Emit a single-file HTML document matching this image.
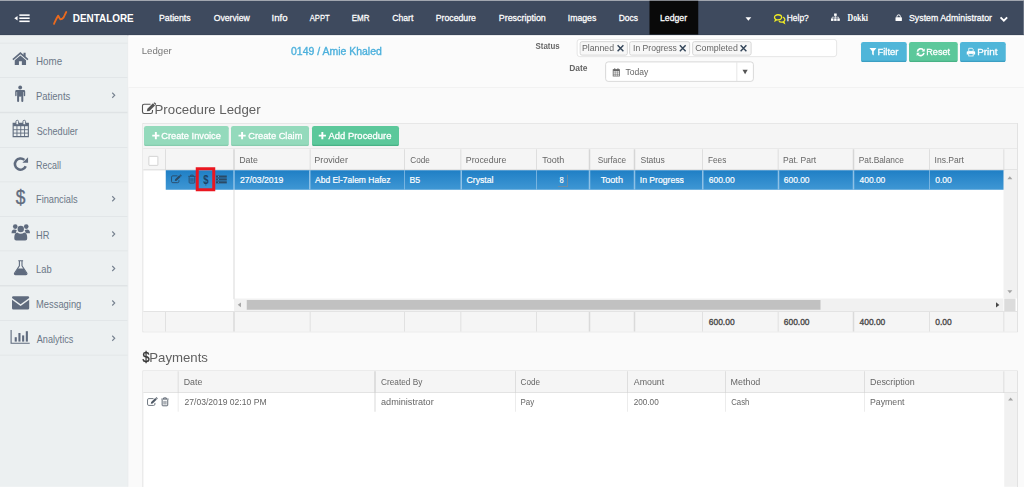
<!DOCTYPE html>
<html>
<head>
<meta charset="utf-8">
<title>Ledger</title>
<style>
*{box-sizing:border-box;margin:0;padding:0}
html,body{width:1024px;height:487px;overflow:hidden;background:#fafafa;font-family:"Liberation Sans",sans-serif;font-size:10px;color:#555}
.a,.t,svg{position:absolute}
.t{white-space:pre;display:block;transform-origin:0 0}
svg{overflow:visible}
</style>
</head>
<body>
<div id="r" style="position:absolute;left:0;top:0;width:1365.33px;height:649.33px;transform:scale(.75);transform-origin:0 0">
<nav>
<div class="a" style="left:0.00px;top:0.00px;width:1365.33px;height:47.07px;background:#3e4a5e;border-top:1px solid #a9adb4;border-bottom:1px solid #364255"></div>
<div class="a" style="left:170.67px;top:47.07px;width:1194.67px;height:2.53px;background:#fff"></div>
<div class="a" style="left:866.00px;top:0.00px;width:65.20px;height:46.40px;background:#090909"></div>
<div class="a" style="left:0.00px;top:0.00px;width:1365.33px;height:1.07px;background:#a9adb4"></div>
<svg style="left:18.53px;top:18.67px" width="20.53" height="10.67" viewBox="0 0 15.4 8"><path d="M0 4 L3.3 1.7 V6.3 Z" fill="#fff"/><rect x="5.1" y="0.1" width="10.3" height="1.55" fill="#fff"/><rect x="5.1" y="3.2" width="10.3" height="1.55" fill="#fff"/><rect x="5.1" y="6.3" width="10.3" height="1.55" fill="#fff"/></svg>
<svg style="left:70.67px;top:15.07px" width="18.13" height="17.60" viewBox="0 0 13.6 13.2"><path d="M0.8 12.6 C2.2 9.6 3.4 6.6 5 4.4 C5.8 5.6 6.2 7.4 7.2 8 C8.4 8 9.6 7.2 10.2 6.4 C11.2 4.8 12 2.6 13 0.7" stroke="#ea6a1e" stroke-width="1.85" fill="none" stroke-linecap="round" stroke-linejoin="round"/></svg>
<span class="t" style="left:97.07px;top:17.00px;font-size:13.73px;line-height:16px;transform:scaleX(0.964);color:#fff;font-weight:bold;">DENTALORE</span>
<span class="t" style="left:212.12px;top:17.00px;font-size:12.4px;line-height:15px;transform:scaleX(0.942);color:#fff;-webkit-text-stroke:0.35px #fff;">Patients</span>
<span class="t" style="left:284.67px;top:17.00px;font-size:12.4px;line-height:15px;transform:scaleX(0.931);color:#fff;-webkit-text-stroke:0.35px #fff;">Overview</span>
<span class="t" style="left:361.64px;top:17.00px;font-size:12.4px;line-height:15px;transform:scaleX(1.032);color:#fff;-webkit-text-stroke:0.35px #fff;">Info</span>
<span class="t" style="left:413.07px;top:17.00px;font-size:12.4px;line-height:15px;transform:scaleX(0.821);color:#fff;-webkit-text-stroke:0.35px #fff;">APPT</span>
<span class="t" style="left:469.40px;top:17.00px;font-size:12.4px;line-height:15px;transform:scaleX(0.863);color:#fff;-webkit-text-stroke:0.35px #fff;">EMR</span>
<span class="t" style="left:523.07px;top:17.00px;font-size:12.4px;line-height:15px;transform:scaleX(0.929);color:#fff;-webkit-text-stroke:0.35px #fff;">Chart</span>
<span class="t" style="left:581.33px;top:17.00px;font-size:12.4px;line-height:15px;transform:scaleX(0.938);color:#fff;-webkit-text-stroke:0.35px #fff;">Procedure</span>
<span class="t" style="left:665.17px;top:17.00px;font-size:12.4px;line-height:15px;transform:scaleX(0.959);color:#fff;-webkit-text-stroke:0.35px #fff;">Prescription</span>
<span class="t" style="left:757.33px;top:17.00px;font-size:12.4px;line-height:15px;transform:scaleX(0.937);color:#fff;-webkit-text-stroke:0.35px #fff;">Images</span>
<span class="t" style="left:825.09px;top:17.00px;font-size:12.4px;line-height:15px;transform:scaleX(0.912);color:#fff;-webkit-text-stroke:0.35px #fff;">Docs</span>
<span class="t" style="left:880.26px;top:17.00px;font-size:12.4px;line-height:15px;transform:scaleX(0.936);color:#fff;-webkit-text-stroke:0.35px #fff;">Ledger</span>
<svg style="left:994.40px;top:22.67px" width="7.73" height="4.53" viewBox="0 0 5.8 3.4"><path d="M0 0 H5.8 L2.9 3.4 Z" fill="#fff"/></svg>
<svg style="left:1032.13px;top:18.93px" width="15.20" height="12.53" viewBox="0 0 11.4 9.4"><path d="M4 0.5 C6 0.5 7.6 1.6 7.6 3.1 C7.6 4.6 6 5.7 4 5.7 C3.6 5.7 3.2 5.65 2.8 5.55 L1.2 6.6 L1.6 5.1 C0.9 4.6 0.5 3.9 0.5 3.1 C0.5 1.6 2 0.5 4 0.5Z" fill="none" stroke="#efeb25" stroke-width="1.3"/><path d="M8.8 2.9 C10.1 3.3 10.9 4.2 10.9 5.3 C10.9 6.1 10.5 6.8 9.8 7.3 L10.3 8.9 L8.5 7.8 C7.3 8.1 5.8 7.9 4.9 7.1" fill="none" stroke="#efeb25" stroke-width="1.3"/></svg>
<span class="t" style="left:1049.23px;top:17.00px;font-size:12.4px;line-height:15px;transform:scaleX(0.906);color:#fff;-webkit-text-stroke:0.35px #fff;">Help?</span>
<svg style="left:1108.27px;top:18.13px" width="11.73" height="9.87" viewBox="0 0 8.8 7.4"><rect x="3.1" y="0" width="2.6" height="2.4" fill="#fff"/><rect x="0" y="4.9" width="2.5" height="2.5" fill="#fff"/><rect x="3.15" y="4.9" width="2.5" height="2.5" fill="#fff"/><rect x="6.3" y="4.9" width="2.5" height="2.5" fill="#fff"/><path d="M4.4 2.4 V4.9 M1.25 4.9 V3.7 H7.55 V4.9" stroke="#fff" stroke-width="0.7" fill="none"/></svg>
<span class="t" style="left:1130.13px;top:16.00px;font-size:13.33px;line-height:16px;transform:scaleX(0.782);color:#fff;font-weight:bold;font-family:'Liberation Serif',serif;">Dokki</span>
<svg style="left:1194.13px;top:18.80px" width="8.53" height="9.07" viewBox="0 0 6.4 6.8"><rect x="0" y="3" width="6.4" height="3.8" rx="0.5" fill="#fff"/><path d="M1.5 3.2 V2.3 a1.7 1.7 0 0 1 3.4 0 V3.2" stroke="#fff" stroke-width="1" fill="none"/></svg>
<span class="t" style="left:1211.73px;top:17.00px;font-size:12.4px;line-height:15px;transform:scaleX(0.945);color:#fff;-webkit-text-stroke:0.35px #fff;">System Administrator</span>
<svg style="left:1333.47px;top:21.60px" width="10.93" height="7.20" viewBox="0 0 8.2 5.4"><path d="M0.8 0.8 L4.1 4.1 L7.4 0.8" stroke="#fff" stroke-width="1.9" fill="none"/></svg>
</nav>
<aside>
<div class="a" style="left:0.00px;top:47.07px;width:169.87px;height:602.27px;background:#ecf0f1"></div>
<div class="a" style="left:169.73px;top:47.07px;width:1.20px;height:602.27px;background:#e3e7e9"></div>
<div class="a" style="left:0.00px;top:57.07px;width:169.73px;height:1.07px;background:#dfe3e5"></div>
<div class="a" style="left:0.00px;top:103.27px;width:169.73px;height:1.07px;background:#dfe3e5"></div>
<div class="a" style="left:0.00px;top:149.47px;width:169.73px;height:1.07px;background:#dfe3e5"></div>
<div class="a" style="left:0.00px;top:195.67px;width:169.73px;height:1.07px;background:#dfe3e5"></div>
<div class="a" style="left:0.00px;top:241.87px;width:169.73px;height:1.07px;background:#dfe3e5"></div>
<div class="a" style="left:0.00px;top:288.07px;width:169.73px;height:1.07px;background:#dfe3e5"></div>
<div class="a" style="left:0.00px;top:334.27px;width:169.73px;height:1.07px;background:#dfe3e5"></div>
<div class="a" style="left:0.00px;top:380.47px;width:169.73px;height:1.07px;background:#dfe3e5"></div>
<div class="a" style="left:0.00px;top:426.67px;width:169.73px;height:1.07px;background:#dfe3e5"></div>
<div class="a" style="left:0.00px;top:472.87px;width:169.73px;height:1.07px;background:#dfe3e5"></div>
<span class="t" style="left:47.95px;top:74.00px;font-size:13.33px;line-height:16px;transform:scaleX(0.98);color:#6b7787;">Home</span>
<span class="t" style="left:47.98px;top:121.00px;font-size:13.33px;line-height:16px;transform:scaleX(0.949);color:#6b7787;">Patients</span>
<svg style="left:149.33px;top:122.53px" width="5.33" height="8.00" viewBox="0 0 4 6"><path d="M0.5 0.5 L3 3 L0.5 5.5" stroke="#76818f" stroke-width="1.1" fill="none"/></svg>
<span class="t" style="left:48.93px;top:168.00px;font-size:13.33px;line-height:16px;transform:scaleX(0.913);color:#6b7787;">Scheduler</span>
<span class="t" style="left:48.04px;top:213.00px;font-size:13.33px;line-height:16px;transform:scaleX(0.898);color:#6b7787;">Recall</span>
<span class="t" style="left:48.01px;top:259.00px;font-size:13.33px;line-height:16px;transform:scaleX(0.924);color:#6b7787;">Financials</span>
<svg style="left:149.33px;top:261.20px" width="5.33" height="8.00" viewBox="0 0 4 6"><path d="M0.5 0.5 L3 3 L0.5 5.5" stroke="#76818f" stroke-width="1.1" fill="none"/></svg>
<span class="t" style="left:48.00px;top:306.00px;font-size:13.33px;line-height:16px;transform:scaleX(0.93);color:#6b7787;">HR</span>
<svg style="left:149.33px;top:307.87px" width="5.33" height="8.00" viewBox="0 0 4 6"><path d="M0.5 0.5 L3 3 L0.5 5.5" stroke="#76818f" stroke-width="1.1" fill="none"/></svg>
<span class="t" style="left:48.00px;top:352.00px;font-size:13.33px;line-height:16px;transform:scaleX(0.935);color:#6b7787;">Lab</span>
<svg style="left:149.33px;top:353.87px" width="5.33" height="8.00" viewBox="0 0 4 6"><path d="M0.5 0.5 L3 3 L0.5 5.5" stroke="#76818f" stroke-width="1.1" fill="none"/></svg>
<span class="t" style="left:48.00px;top:398.00px;font-size:13.33px;line-height:16px;transform:scaleX(0.937);color:#6b7787;">Messaging</span>
<svg style="left:149.33px;top:400.00px" width="5.33" height="8.00" viewBox="0 0 4 6"><path d="M0.5 0.5 L3 3 L0.5 5.5" stroke="#76818f" stroke-width="1.1" fill="none"/></svg>
<span class="t" style="left:48.93px;top:445.00px;font-size:13.33px;line-height:16px;transform:scaleX(0.914);color:#6b7787;">Analytics</span>
<svg style="left:149.33px;top:446.67px" width="5.33" height="8.00" viewBox="0 0 4 6"><path d="M0.5 0.5 L3 3 L0.5 5.5" stroke="#76818f" stroke-width="1.1" fill="none"/></svg>
<svg style="left:15.87px;top:68.93px" width="22.40" height="18.13" viewBox="0 0 16 13"><path d="M8 0.3 L0.3 6.9 L1.3 8.1 L8 2.5 L14.7 8.1 L15.7 6.9 L13 4.6 V0.9 H11 V2.9 Z" fill="#5f6b7e"/><path d="M8 3.6 L2.6 8.1 V12.7 H6.6 V9.2 H9.4 V12.7 H13.4 V8.1 Z" fill="#5f6b7e"/></svg>
<svg style="left:20.40px;top:114.00px" width="13.87" height="22.13" viewBox="0 0 10.4 16.6"><circle cx="5.2" cy="2" r="1.9" fill="#5f6b7e"/><path d="M1.6 4.6 H8.8 Q10.2 4.6 10.2 6 V10 Q10.2 10.8 9.5 10.8 Q8.8 10.8 8.8 10 V6.6 H8.3 V15.6 Q8.3 16.5 7.3 16.5 Q6.3 16.5 6.3 15.6 V10.8 H5.6 H4.1 V15.6 Q4.1 16.5 3.1 16.5 Q2.1 16.5 2.1 15.6 V6.6 H1.6 V10 Q1.6 10.8 0.9 10.8 Q0.2 10.8 0.2 10 V6 Q0.2 4.6 1.6 4.6Z" fill="#5f6b7e"/><rect x="4.1" y="6" width="2.2" height="5" fill="#5f6b7e"/></svg>
<svg style="left:16.93px;top:160.00px" width="21.33" height="22.67" viewBox="0 0 16 17"><path d="M0.4 3.2 H15.6 V16.6 H0.4Z" fill="none" stroke="#5f6b7e" stroke-width="1.1"/><rect x="0.4" y="3" width="15.2" height="3.2" fill="#5f6b7e"/><path d="M0.4 9.7 H15.6 M0.4 13.1 H15.6 M4.2 6 V16.6 M8 6 V16.6 M11.8 6 V16.6" stroke="#5f6b7e" stroke-width="0.9" fill="none"/><rect x="3.2" y="0.3" width="2.6" height="4.4" rx="1.2" fill="#ecf0f1" stroke="#5f6b7e" stroke-width="0.9"/><rect x="10.2" y="0.3" width="2.6" height="4.4" rx="1.2" fill="#ecf0f1" stroke="#5f6b7e" stroke-width="0.9"/></svg>
<svg style="left:17.60px;top:208.53px" width="19.73" height="18.93" viewBox="0 0 15 14"><path d="M12.4 9.4 A5.7 5.7 0 1 1 11 3" fill="none" stroke="#5f6b7e" stroke-width="2.6"/><path d="M14.8 0.2 V6 H9 Z" fill="#5f6b7e"/></svg>
<svg style="left:14.80px;top:298.13px" width="25.33" height="22.93" viewBox="0 0 19 17"><circle cx="4" cy="3" r="2.3" fill="#5f6b7e"/><circle cx="15" cy="3" r="2.3" fill="#5f6b7e"/><circle cx="9.5" cy="5.4" r="3.2" fill="#5f6b7e"/><path d="M0.3 9.4 Q0.3 5.8 3 5.8 Q5 5.8 5.6 7 Q4.6 8.4 4.6 9.6 H0.3Z" fill="#5f6b7e"/><path d="M18.7 9.4 Q18.7 5.8 16 5.8 Q14 5.8 13.4 7 Q14.4 8.4 14.4 9.6 H18.7Z" fill="#5f6b7e"/><path d="M3 14.6 Q3 9.2 6 9 Q9.5 11.4 13 9 Q16 9.2 16 14.6 Q16 16.8 14 16.8 H5 Q3 16.8 3 14.6Z" fill="#5f6b7e"/></svg>
<svg style="left:17.60px;top:346.67px" width="19.20" height="20.00" viewBox="0 0 14.4 15"><path d="M4.8 0.5 H9.6 M5.9 0.5 V5.6 L1 13 Q0.6 14.4 2 14.4 H12.4 Q13.8 14.4 13.4 13 L8.5 5.6 V0.5" fill="none" stroke="#5f6b7e" stroke-width="1.1"/><path d="M4.2 8.2 H10.2 L13.2 13.2 Q13.5 14.3 12.4 14.3 H2 Q0.9 14.3 1.2 13.2Z" fill="#5f6b7e"/></svg>
<svg style="left:15.87px;top:394.67px" width="22.93" height="17.73" viewBox="0 0 17.2 13.3"><path d="M1.4 0 H15.8 Q17.2 0 17.2 1.4 V1.8 L8.6 8 L0 1.8 V1.4 Q0 0 1.4 0Z" fill="#5f6b7e"/><path d="M0 3.6 L8.6 9.8 L17.2 3.6 V11.9 Q17.2 13.3 15.8 13.3 H1.4 Q0 13.3 0 11.9Z" fill="#5f6b7e"/></svg>
<svg style="left:14.40px;top:440.00px" width="25.60" height="18.67" viewBox="0 0 19.2 14"><path d="M0.6 0 V13.3 H19.2" fill="none" stroke="#5f6b7e" stroke-width="1.1"/><rect x="4.2" y="7.2" width="2.1" height="4.4" fill="#5f6b7e"/><rect x="7.9" y="3" width="2.1" height="8.6" fill="#5f6b7e"/><rect x="11.6" y="5.4" width="2.1" height="6.2" fill="#5f6b7e"/><rect x="15.3" y="1.2" width="2.1" height="10.4" fill="#5f6b7e"/></svg>
<span class="t" style="left:21.07px;top:248.00px;font-size:25.87px;line-height:31px;transform:scaleX(0.895);color:#5f6b7e;-webkit-text-stroke:0.5px #5f6b7e;">$</span>
</aside>
<main>
<header>
<div class="a" style="left:170.93px;top:49.60px;width:1194.40px;height:67.20px;background:#fbfbfb;border-bottom:1px solid #efefef"></div>
<span class="t" style="left:188.88px;top:60.00px;font-size:13.07px;line-height:16px;transform:scaleX(0.985);color:#777;">Ledger</span>
<span class="t" style="left:387.73px;top:61.00px;font-size:13.6px;line-height:16px;transform:scaleX(1.027);color:#4cb0dc;-webkit-text-stroke:0.45px #4cb0dc;">0149 / Amie Khaled</span>
<span class="t" style="left:714.27px;top:54.00px;font-size:12.0px;line-height:14px;transform:scaleX(0.879);color:#666;font-weight:bold;">Status</span>
<span class="t" style="left:759.33px;top:83.00px;font-size:12.0px;line-height:14px;transform:scaleX(0.937);color:#666;font-weight:bold;">Date</span>
<div class="a" style="left:769.33px;top:52.40px;width:346.67px;height:23.73px;background:#fff;border:1px solid #ddd;border-radius:4px"></div>
<div class="a" style="left:772.80px;top:54.67px;width:64.40px;height:18.93px;background:#f7f7f7;border:1px solid #ccc;border-radius:3px"></div>
<span class="t" style="left:776.39px;top:57.00px;font-size:12.4px;line-height:15px;transform:scaleX(0.939);color:#666;">Planned</span>
<svg style="left:821.60px;top:58.93px" width="10.67" height="10.67" viewBox="-4 -4 8 8"><path d="M-2.9 -2.9 L2.9 2.9 M-2.9 2.9 L2.9 -2.9" stroke="#34465a" stroke-width="1.45" fill="none"/></svg>
<div class="a" style="left:838.80px;top:54.67px;width:81.20px;height:18.93px;background:#f7f7f7;border:1px solid #ccc;border-radius:3px"></div>
<span class="t" style="left:843.74px;top:57.00px;font-size:12.4px;line-height:15px;transform:scaleX(0.924);color:#666;">In Progress</span>
<svg style="left:904.93px;top:58.93px" width="10.67" height="10.67" viewBox="-4 -4 8 8"><path d="M-2.9 -2.9 L2.9 2.9 M-2.9 2.9 L2.9 -2.9" stroke="#34465a" stroke-width="1.45" fill="none"/></svg>
<div class="a" style="left:922.67px;top:54.67px;width:79.33px;height:18.93px;background:#f7f7f7;border:1px solid #ccc;border-radius:3px"></div>
<span class="t" style="left:927.47px;top:57.00px;font-size:12.4px;line-height:15px;transform:scaleX(0.948);color:#666;">Completed</span>
<svg style="left:986.33px;top:58.93px" width="10.67" height="10.67" viewBox="-4 -4 8 8"><path d="M-2.9 -2.9 L2.9 2.9 M-2.9 2.9 L2.9 -2.9" stroke="#34465a" stroke-width="1.45" fill="none"/></svg>
<div class="a" style="left:806.67px;top:81.87px;width:197.87px;height:27.07px;background:#fff;border:1px solid #ccc;border-radius:4px"></div>
<div class="a" style="left:981.73px;top:83.20px;width:1.07px;height:24.40px;background:#ddd"></div>
<svg style="left:816.67px;top:91.20px" width="9.60" height="10.93" viewBox="0 0 7.2 8.2"><rect x="0.4" y="1.4" width="6.4" height="6.4" fill="none" stroke="#666" stroke-width="0.8"/><rect x="0.4" y="1.2" width="6.4" height="1.8" fill="#666"/><path d="M0.4 4.6 H6.8 M0.4 6.2 H6.8 M2.5 3 V7.8 M4.7 3 V7.8" stroke="#666" stroke-width="0.5"/><rect x="1.5" y="0" width="1" height="2" fill="#666"/><rect x="4.7" y="0" width="1" height="2" fill="#666"/></svg>
<span class="t" style="left:833.73px;top:89.00px;font-size:12.4px;line-height:15px;transform:scaleX(0.921);color:#666;">Today</span>
<svg style="left:990.13px;top:93.07px" width="6.93" height="5.87" viewBox="0 0 5.2 4.4"><path d="M0 0 H5.2 L2.6 4.4Z" fill="#555"/></svg>
<div class="a" style="left:1148.00px;top:55.87px;width:60.93px;height:26.80px;background:#50b6d9;border-bottom:2px solid #3b9fc3;border-radius:3px"></div>
<div class="a" style="left:1212.00px;top:55.87px;width:64.53px;height:26.80px;background:#5cc89b;border-bottom:2px solid #48b286;border-radius:3px"></div>
<div class="a" style="left:1279.73px;top:55.87px;width:61.20px;height:26.80px;background:#50b6d9;border-bottom:2px solid #3b9fc3;border-radius:3px"></div>
<svg style="left:1158.53px;top:64.13px" width="9.87" height="10.40" viewBox="0 0 7.2 7.6"><path d="M0.2 0 H7 L4.4 3.2 V7.4 L2.8 6 V3.2Z" fill="#fff"/></svg>
<span class="t" style="left:1170.24px;top:61.00px;font-size:13.07px;line-height:16px;transform:scaleX(0.962);color:#fff;-webkit-text-stroke:0.4px #fff;">Filter</span>
<svg style="left:1221.73px;top:63.60px" width="11.20" height="11.20" viewBox="0 0 8.4 8.4"><path d="M0.9 3.6 A3.4 3.4 0 0 1 6.8 1.9 M7.5 4.8 A3.4 3.4 0 0 1 1.6 6.5" stroke="#fff" stroke-width="1.6" fill="none"/><path d="M8.2 0.4 V3.6 H5Z M0.2 8 V4.8 H3.4Z" fill="#fff"/></svg>
<span class="t" style="left:1235.07px;top:61.00px;font-size:13.07px;line-height:16px;transform:scaleX(0.932);color:#fff;-webkit-text-stroke:0.4px #fff;">Reset</span>
<svg style="left:1289.33px;top:63.60px" width="11.20" height="11.20" viewBox="0 0 8.4 8.4"><path d="M2 0.3 H5.6 L6.4 1.2 V3.4 H2Z" fill="none" stroke="#fff" stroke-width="0.8"/><path d="M0.8 3.2 H7.6 Q8.4 3.2 8.4 4 V6.6 H6.8 V5.2 H1.6 V6.6 H0 V4 Q0 3.2 0.8 3.2Z" fill="#fff"/><rect x="2" y="5.6" width="4.4" height="2.4" fill="none" stroke="#fff" stroke-width="0.8"/></svg>
<span class="t" style="left:1303.26px;top:61.00px;font-size:13.07px;line-height:16px;transform:scaleX(1.007);color:#fff;-webkit-text-stroke:0.4px #fff;">Print</span>
</header>
<section>
<svg style="left:188.80px;top:136.53px" width="19.52" height="15.45" viewBox="0 0 12 9.5"><path d="M7.2 1.2 H2 Q0.6 1.2 0.6 2.6 V7.4 Q0.6 8.8 2 8.8 H7.4 Q8.8 8.8 8.8 7.4 V6" fill="none" stroke="#555" stroke-width="0.9"/><path d="M4.2 6.9 L4.6 5 L9.2 0.5 L10.9 2.2 L6.3 6.7Z M9.7 0.2 L10.2 -0.2 Q10.6 -0.4 11 0 L11.6 0.6 Q12 1 11.7 1.4 L11.3 1.9Z" fill="#555"/></svg>
<span class="t" style="left:206.48px;top:135.00px;font-size:18.0px;line-height:22px;transform:scaleX(0.982);color:#606060;">Procedure Ledger</span>
<div class="a" style="left:189.73px;top:163.73px;width:1167.20px;height:278.93px;background:#fff;border:1px solid #d9d9d9"></div>
<div class="a" style="left:190.80px;top:164.80px;width:1165.07px;height:34.67px;background:#f5f5f5;border-bottom:1px solid #ddd"></div>
<div class="a" style="left:192.40px;top:167.87px;width:112.40px;height:27.07px;background:#94dabc;border-bottom:2px solid #86ccae;border-radius:3px"></div>
<div class="a" style="left:308.00px;top:167.87px;width:104.40px;height:27.07px;background:#94dabc;border-bottom:2px solid #86ccae;border-radius:3px"></div>
<div class="a" style="left:415.73px;top:167.87px;width:116.53px;height:27.07px;background:#5cc89b;border-bottom:2px solid #48b286;border-radius:3px"></div>
<svg style="left:202.67px;top:176.40px" width="9.60" height="9.60" viewBox="0 0 7.2 7.2"><path d="M3.6 0 V7.2 M0 3.6 H7.2" stroke="#fff" stroke-width="1.9" fill="none"/></svg>
<span class="t" style="left:215.47px;top:174.00px;font-size:12.67px;line-height:15px;transform:scaleX(0.974);color:#fff;-webkit-text-stroke:0.4px #fff;">Create Invoice</span>
<svg style="left:317.87px;top:176.40px" width="9.60" height="9.60" viewBox="0 0 7.2 7.2"><path d="M3.6 0 V7.2 M0 3.6 H7.2" stroke="#fff" stroke-width="1.9" fill="none"/></svg>
<span class="t" style="left:330.93px;top:174.00px;font-size:12.67px;line-height:15px;transform:scaleX(0.977);color:#fff;-webkit-text-stroke:0.4px #fff;">Create Claim</span>
<svg style="left:425.47px;top:176.40px" width="9.60" height="9.60" viewBox="0 0 7.2 7.2"><path d="M3.6 0 V7.2 M0 3.6 H7.2" stroke="#fff" stroke-width="1.9" fill="none"/></svg>
<span class="t" style="left:438.40px;top:174.00px;font-size:12.67px;line-height:15px;transform:scaleX(0.995);color:#fff;-webkit-text-stroke:0.4px #fff;">Add Procedure</span>
<div class="a" style="left:190.80px;top:199.47px;width:1165.07px;height:27.73px;background:#f5f5f5;border-bottom:1px solid #d4d4d4"></div>
<div class="a" style="left:198.13px;top:208.13px;width:12.53px;height:13.07px;background:#fff;border:1px solid #c8c8c8;border-radius:1px"></div>
<div class="a" style="left:220.67px;top:226.80px;width:1117.87px;height:26.13px;background:linear-gradient(#1f7fc5,#3f97d4)"></div>
<div class="a" style="left:312.00px;top:398.13px;width:1026.40px;height:16.80px;background:#f1f1f1"></div>
<div class="a" style="left:1338.80px;top:398.13px;width:15.60px;height:16.80px;background:#dcdcdc"></div>
<div class="a" style="left:328.67px;top:400.13px;width:765.33px;height:12.80px;background:#c1c1c1"></div>
<svg style="left:317.33px;top:402.93px" width="4.27" height="6.93" viewBox="0 0 3 4.6"><path d="M3 0 V4.6 L0 2.3Z" fill="#a3a3a3"/></svg>
<svg style="left:1327.73px;top:402.67px" width="4.53" height="7.20" viewBox="0 0 3 4.6"><path d="M0 0 V4.6 L3 2.3Z" fill="#484848"/></svg>
<div class="a" style="left:1338.40px;top:226.80px;width:17.47px;height:171.33px;background:#f1f1f1"></div>
<svg style="left:1343.47px;top:234.53px" width="6.93" height="4.00" viewBox="0 0 5 3"><path d="M0 3 H5 L2.5 0Z" fill="#a3a3a3"/></svg>
<svg style="left:1343.47px;top:386.93px" width="6.93" height="4.00" viewBox="0 0 5 3"><path d="M0 0 H5 L2.5 3Z" fill="#a3a3a3"/></svg>
<div class="a" style="left:190.80px;top:414.93px;width:1165.07px;height:26.67px;background:#f5f5f5;border-top:1px solid #ddd"></div>
<div class="a" style="left:219.73px;top:199.47px;width:1.07px;height:27.73px;background:#d6d6d6"></div>
<div class="a" style="left:219.73px;top:416.00px;width:1.07px;height:25.60px;background:#dadada"></div>
<div class="a" style="left:311.47px;top:199.47px;width:1.07px;height:27.73px;background:#d6d6d6"></div>
<div class="a" style="left:311.47px;top:416.00px;width:1.07px;height:25.60px;background:#dadada"></div>
<div class="a" style="left:311.33px;top:226.80px;width:1.33px;height:26.13px;background:#8fc1e6"></div>
<div class="a" style="left:412.53px;top:199.47px;width:1.07px;height:27.73px;background:#d6d6d6"></div>
<div class="a" style="left:412.53px;top:416.00px;width:1.07px;height:25.60px;background:#dadada"></div>
<div class="a" style="left:412.40px;top:226.80px;width:1.33px;height:26.13px;background:#8fc1e6"></div>
<div class="a" style="left:539.07px;top:199.47px;width:1.07px;height:27.73px;background:#d6d6d6"></div>
<div class="a" style="left:539.07px;top:416.00px;width:1.07px;height:25.60px;background:#dadada"></div>
<div class="a" style="left:538.93px;top:226.80px;width:1.33px;height:26.13px;background:#8fc1e6"></div>
<div class="a" style="left:614.40px;top:199.47px;width:1.07px;height:27.73px;background:#d6d6d6"></div>
<div class="a" style="left:614.40px;top:416.00px;width:1.07px;height:25.60px;background:#dadada"></div>
<div class="a" style="left:614.27px;top:226.80px;width:1.33px;height:26.13px;background:#8fc1e6"></div>
<div class="a" style="left:714.93px;top:199.47px;width:1.07px;height:27.73px;background:#d6d6d6"></div>
<div class="a" style="left:714.93px;top:416.00px;width:1.07px;height:25.60px;background:#dadada"></div>
<div class="a" style="left:714.80px;top:226.80px;width:1.33px;height:26.13px;background:#8fc1e6"></div>
<div class="a" style="left:785.47px;top:199.47px;width:1.07px;height:27.73px;background:#d6d6d6"></div>
<div class="a" style="left:785.47px;top:416.00px;width:1.07px;height:25.60px;background:#dadada"></div>
<div class="a" style="left:785.33px;top:226.80px;width:1.33px;height:26.13px;background:#8fc1e6"></div>
<div class="a" style="left:845.47px;top:199.47px;width:1.07px;height:27.73px;background:#d6d6d6"></div>
<div class="a" style="left:845.47px;top:416.00px;width:1.07px;height:25.60px;background:#dadada"></div>
<div class="a" style="left:845.33px;top:226.80px;width:1.33px;height:26.13px;background:#8fc1e6"></div>
<div class="a" style="left:936.40px;top:199.47px;width:1.07px;height:27.73px;background:#d6d6d6"></div>
<div class="a" style="left:936.40px;top:416.00px;width:1.07px;height:25.60px;background:#dadada"></div>
<div class="a" style="left:936.27px;top:226.80px;width:1.33px;height:26.13px;background:#8fc1e6"></div>
<div class="a" style="left:1037.33px;top:199.47px;width:1.07px;height:27.73px;background:#d6d6d6"></div>
<div class="a" style="left:1037.33px;top:416.00px;width:1.07px;height:25.60px;background:#dadada"></div>
<div class="a" style="left:1037.20px;top:226.80px;width:1.33px;height:26.13px;background:#8fc1e6"></div>
<div class="a" style="left:1137.47px;top:199.47px;width:1.07px;height:27.73px;background:#d6d6d6"></div>
<div class="a" style="left:1137.47px;top:416.00px;width:1.07px;height:25.60px;background:#dadada"></div>
<div class="a" style="left:1137.33px;top:226.80px;width:1.33px;height:26.13px;background:#8fc1e6"></div>
<div class="a" style="left:1238.80px;top:199.47px;width:1.07px;height:27.73px;background:#d6d6d6"></div>
<div class="a" style="left:1238.80px;top:416.00px;width:1.07px;height:25.60px;background:#dadada"></div>
<div class="a" style="left:1238.67px;top:226.80px;width:1.33px;height:26.13px;background:#8fc1e6"></div>
<div class="a" style="left:1338.00px;top:199.47px;width:1.07px;height:27.73px;background:#d6d6d6"></div>
<div class="a" style="left:1338.00px;top:416.00px;width:1.07px;height:25.60px;background:#dadada"></div>
<div class="a" style="left:311.33px;top:252.93px;width:1.33px;height:145.73px;background:#e6e6e6"></div>
<span class="t" style="left:319.05px;top:206.00px;font-size:12.4px;line-height:15px;transform:scaleX(0.949);color:#666;">Date</span>
<span class="t" style="left:419.30px;top:206.00px;font-size:12.4px;line-height:15px;transform:scaleX(0.972);color:#666;">Provider</span>
<span class="t" style="left:546.93px;top:206.00px;font-size:12.4px;line-height:15px;transform:scaleX(0.879);color:#666;">Code</span>
<span class="t" style="left:620.92px;top:206.00px;font-size:12.4px;line-height:15px;transform:scaleX(0.948);color:#666;">Procedure</span>
<span class="t" style="left:722.80px;top:206.00px;font-size:12.4px;line-height:15px;transform:scaleX(0.969);color:#666;">Tooth</span>
<span class="t" style="left:797.20px;top:206.00px;font-size:12.4px;line-height:15px;transform:scaleX(0.885);color:#666;">Surface</span>
<span class="t" style="left:853.73px;top:206.00px;font-size:12.4px;line-height:15px;transform:scaleX(0.92);color:#666;">Status</span>
<span class="t" style="left:943.78px;top:206.00px;font-size:12.4px;line-height:15px;transform:scaleX(0.885);color:#666;">Fees</span>
<span class="t" style="left:1044.15px;top:206.00px;font-size:12.4px;line-height:15px;transform:scaleX(0.916);color:#666;">Pat. Part</span>
<span class="t" style="left:1145.10px;top:206.00px;font-size:12.4px;line-height:15px;transform:scaleX(0.9);color:#666;">Pat.Balance</span>
<span class="t" style="left:1245.75px;top:206.00px;font-size:12.4px;line-height:15px;transform:scaleX(0.921);color:#666;">Ins.Part</span>
<span class="t" style="left:320.00px;top:233.00px;font-size:12.53px;line-height:15px;transform:scaleX(0.921);color:#fff;-webkit-text-stroke:0.28px #fff;">27/03/2019</span>
<span class="t" style="left:420.27px;top:233.00px;font-size:12.53px;line-height:15px;transform:scaleX(0.904);color:#fff;-webkit-text-stroke:0.28px #fff;">Abd El-7alem Hafez</span>
<span class="t" style="left:546.00px;top:233.00px;font-size:12.53px;line-height:15px;transform:scaleX(0.929);color:#fff;-webkit-text-stroke:0.28px #fff;">B5</span>
<span class="t" style="left:621.87px;top:233.00px;font-size:12.53px;line-height:15px;transform:scaleX(0.922);color:#fff;-webkit-text-stroke:0.28px #fff;">Crystal</span>
<span class="t" style="left:746.40px;top:233.00px;font-size:12.53px;line-height:15px;transform:scaleX(0.8);color:#fff;-webkit-text-stroke:0.28px #fff;">8</span>
<span class="t" style="left:801.33px;top:233.00px;font-size:12.53px;line-height:15px;transform:scaleX(0.966);color:#fff;-webkit-text-stroke:0.28px #fff;">Tooth</span>
<span class="t" style="left:852.81px;top:233.00px;font-size:12.53px;line-height:15px;transform:scaleX(0.92);color:#fff;-webkit-text-stroke:0.28px #fff;">In Progress</span>
<span class="t" style="left:944.67px;top:233.00px;font-size:12.53px;line-height:15px;transform:scaleX(0.901);color:#fff;-webkit-text-stroke:0.28px #fff;">600.00</span>
<span class="t" style="left:1045.07px;top:233.00px;font-size:12.53px;line-height:15px;transform:scaleX(0.898);color:#fff;-webkit-text-stroke:0.28px #fff;">600.00</span>
<span class="t" style="left:1146.00px;top:233.00px;font-size:12.53px;line-height:15px;transform:scaleX(0.898);color:#fff;-webkit-text-stroke:0.28px #fff;">400.00</span>
<span class="t" style="left:1246.67px;top:233.00px;font-size:12.53px;line-height:15px;transform:scaleX(0.902);color:#fff;-webkit-text-stroke:0.28px #fff;">0.00</span>
<span class="t" style="left:944.67px;top:422.00px;font-size:12.53px;line-height:15px;transform:scaleX(0.901);color:#4a4a4a;-webkit-text-stroke:0.5px #4a4a4a;">600.00</span>
<span class="t" style="left:1045.07px;top:422.00px;font-size:12.53px;line-height:15px;transform:scaleX(0.898);color:#4a4a4a;-webkit-text-stroke:0.5px #4a4a4a;">600.00</span>
<span class="t" style="left:1146.00px;top:422.00px;font-size:12.53px;line-height:15px;transform:scaleX(0.898);color:#4a4a4a;-webkit-text-stroke:0.5px #4a4a4a;">400.00</span>
<span class="t" style="left:1246.67px;top:422.00px;font-size:12.53px;line-height:15px;transform:scaleX(0.902);color:#4a4a4a;-webkit-text-stroke:0.5px #4a4a4a;">0.00</span>
<svg style="left:228.00px;top:233.33px" width="14.40" height="11.40" viewBox="0 0 12 9.5"><path d="M7.2 1.2 H2 Q0.6 1.2 0.6 2.6 V7.4 Q0.6 8.8 2 8.8 H7.4 Q8.8 8.8 8.8 7.4 V6" fill="none" stroke="#2a4a66" stroke-width="1.0"/><path d="M4.2 6.9 L4.6 5 L9.2 0.5 L10.9 2.2 L6.3 6.7Z M9.7 0.2 L10.2 -0.2 Q10.6 -0.4 11 0 L11.6 0.6 Q12 1 11.7 1.4 L11.3 1.9Z" fill="#2a4a66"/></svg>
<svg style="left:251.47px;top:233.33px" width="9.87" height="11.47" viewBox="0 0 7.4 8.6"><path d="M0 1.6 H7.4 M2.4 1.6 V0.4 H5 V1.6" stroke="#2a4a66" stroke-width="0.9" fill="none"/><path d="M0.9 2.4 V7.6 Q0.9 8.3 1.6 8.3 H5.8 Q6.5 8.3 6.5 7.6 V2.4" fill="none" stroke="#2a4a66" stroke-width="0.9"/><path d="M2.6 3.4 V7 M3.7 3.4 V7 M4.8 3.4 V7" stroke="#2a4a66" stroke-width="0.6"/></svg>
<span class="t" style="left:271.47px;top:230.00px;font-size:16.8px;line-height:20px;transform:scaleX(0.76);color:#1f4263;font-weight:bold;">$</span>
<svg style="left:288.00px;top:233.87px" width="14.40" height="10.67" viewBox="0 0 10.8 8"><rect x="0" y="0" width="10.8" height="2.1" fill="#2a4a66"/><rect x="0" y="2.9" width="10.8" height="2.1" fill="#2a4a66"/><rect x="0" y="5.8" width="10.8" height="2.1" fill="#2a4a66"/><rect x="2" y="0.5" width="1" height="1" fill="#3d93d2"/><rect x="2" y="3.4" width="1" height="1" fill="#3d93d2"/><rect x="2" y="6.3" width="1" height="1" fill="#3d93d2"/></svg>
<div class="a" style="left:261.47px;top:222.67px;width:25.20px;height:32.80px;border:4.8px solid #ea1720"></div>
<div class="a" style="left:744.00px;top:232.93px;width:12.93px;height:16.00px;border-right:1.7px solid #7d8b99;border-bottom:1.7px solid #7d8b99"></div>
</section>
<section>
<span class="t" style="left:190.00px;top:464.00px;font-size:20.27px;line-height:24px;transform:scaleX(0.836);color:#333;-webkit-text-stroke:0.5px #333;">$</span>
<span class="t" style="left:199.29px;top:466.00px;font-size:18.0px;line-height:22px;transform:scaleX(0.978);color:#606060;">Payments</span>
<div class="a" style="left:189.73px;top:494.27px;width:1167.20px;height:165.73px;background:#fff;border:1px solid #d9d9d9"></div>
<div class="a" style="left:190.80px;top:495.33px;width:1165.07px;height:28.53px;background:#f5f5f5;border-bottom:1px solid #ddd"></div>
<div class="a" style="left:1339.07px;top:523.87px;width:16.80px;height:125.47px;background:#f1f1f1"></div>
<svg style="left:1343.73px;top:530.27px" width="6.93" height="4.00" viewBox="0 0 5 3"><path d="M0 3 H5 L2.5 0Z" fill="#a3a3a3"/></svg>
<div class="a" style="left:237.20px;top:495.33px;width:1.07px;height:28.53px;background:#d6d6d6"></div>
<div class="a" style="left:237.20px;top:523.87px;width:1.07px;height:25.20px;background:#e6e6e6"></div>
<div class="a" style="left:499.47px;top:495.33px;width:1.07px;height:28.53px;background:#d6d6d6"></div>
<div class="a" style="left:499.47px;top:523.87px;width:1.07px;height:25.20px;background:#e6e6e6"></div>
<div class="a" style="left:686.53px;top:495.33px;width:1.07px;height:28.53px;background:#d6d6d6"></div>
<div class="a" style="left:686.53px;top:523.87px;width:1.07px;height:25.20px;background:#e6e6e6"></div>
<div class="a" style="left:836.27px;top:495.33px;width:1.07px;height:28.53px;background:#d6d6d6"></div>
<div class="a" style="left:836.27px;top:523.87px;width:1.07px;height:25.20px;background:#e6e6e6"></div>
<div class="a" style="left:966.53px;top:495.33px;width:1.07px;height:28.53px;background:#d6d6d6"></div>
<div class="a" style="left:966.53px;top:523.87px;width:1.07px;height:25.20px;background:#e6e6e6"></div>
<div class="a" style="left:1152.40px;top:495.33px;width:1.07px;height:28.53px;background:#d6d6d6"></div>
<div class="a" style="left:1152.40px;top:523.87px;width:1.07px;height:25.20px;background:#e6e6e6"></div>
<div class="a" style="left:1337.87px;top:495.33px;width:1.07px;height:28.53px;background:#d6d6d6"></div>
<span class="t" style="left:244.92px;top:502.00px;font-size:12.4px;line-height:15px;transform:scaleX(0.949);color:#666;">Date</span>
<span class="t" style="left:507.73px;top:502.00px;font-size:12.4px;line-height:15px;transform:scaleX(0.888);color:#666;">Created By</span>
<span class="t" style="left:694.40px;top:502.00px;font-size:12.4px;line-height:15px;transform:scaleX(0.879);color:#666;">Code</span>
<span class="t" style="left:844.80px;top:502.00px;font-size:12.4px;line-height:15px;transform:scaleX(0.949);color:#666;">Amount</span>
<span class="t" style="left:974.24px;top:502.00px;font-size:12.4px;line-height:15px;transform:scaleX(0.963);color:#666;">Method</span>
<span class="t" style="left:1159.57px;top:502.00px;font-size:12.4px;line-height:15px;transform:scaleX(0.96);color:#666;">Description</span>
<span class="t" style="left:245.87px;top:529.00px;font-size:12.4px;line-height:15px;transform:scaleX(0.923);color:#666;">27/03/2019 02:10 PM</span>
<span class="t" style="left:507.73px;top:529.00px;font-size:12.4px;line-height:15px;transform:scaleX(0.981);color:#666;">administrator</span>
<span class="t" style="left:693.54px;top:529.00px;font-size:12.4px;line-height:15px;transform:scaleX(0.857);color:#666;">Pay</span>
<span class="t" style="left:844.80px;top:529.00px;font-size:12.4px;line-height:15px;transform:scaleX(0.877);color:#666;">200.00</span>
<span class="t" style="left:975.20px;top:529.00px;font-size:12.4px;line-height:15px;transform:scaleX(0.836);color:#666;">Cash</span>
<span class="t" style="left:1159.59px;top:529.00px;font-size:12.4px;line-height:15px;transform:scaleX(0.941);color:#666;">Payment</span>
<svg style="left:196.00px;top:529.73px" width="14.40" height="11.40" viewBox="0 0 12 9.5"><path d="M7.2 1.2 H2 Q0.6 1.2 0.6 2.6 V7.4 Q0.6 8.8 2 8.8 H7.4 Q8.8 8.8 8.8 7.4 V6" fill="none" stroke="#505a66" stroke-width="0.9"/><path d="M4.2 6.9 L4.6 5 L9.2 0.5 L10.9 2.2 L6.3 6.7Z M9.7 0.2 L10.2 -0.2 Q10.6 -0.4 11 0 L11.6 0.6 Q12 1 11.7 1.4 L11.3 1.9Z" fill="#505a66"/></svg>
<svg style="left:215.20px;top:529.60px" width="9.87" height="11.47" viewBox="0 0 7.4 8.6"><path d="M0 1.6 H7.4 M2.4 1.6 V0.4 H5 V1.6" stroke="#505a66" stroke-width="0.9" fill="none"/><path d="M0.9 2.4 V7.6 Q0.9 8.3 1.6 8.3 H5.8 Q6.5 8.3 6.5 7.6 V2.4" fill="none" stroke="#505a66" stroke-width="0.9"/><path d="M2.6 3.4 V7 M3.7 3.4 V7 M4.8 3.4 V7" stroke="#505a66" stroke-width="0.6"/></svg>
</section>
</main>
</div>
</body>
</html>
